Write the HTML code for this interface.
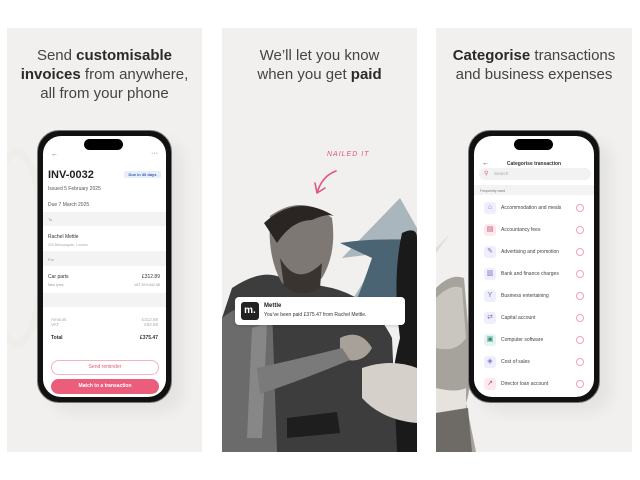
<!DOCTYPE html>
<html><head><meta charset="utf-8"><style>
*{margin:0;padding:0;box-sizing:border-box}
body{width:640px;height:480px;background:#fff;position:relative;overflow:hidden;font-family:"Liberation Sans",sans-serif;color:#2e2e2e}
.p{position:absolute;top:28px;height:424px;background:#f1f0ee;overflow:hidden}
.t{position:absolute;left:0;right:0;text-align:center;font-size:15px;line-height:19px;color:#444}
.t b{color:#2a2a2a}
.a{position:absolute}
.ph{position:absolute;background:#111;border-radius:22px;border:1px solid #777;box-shadow:12px 10px 14px rgba(0,0,0,.05)}
.sc{position:absolute;left:5px;top:5px;right:5px;bottom:5px;background:#fff;border-radius:18px;overflow:hidden}
.isl{position:absolute;width:39px;height:11px;background:#000;border-radius:6px}
.s{font-size:5px;color:#555;white-space:nowrap}
.band{position:absolute;left:0;right:0;background:#f3f3f3}
.it{position:absolute;left:0;right:0;height:22px}
.ic{position:absolute;left:10px;top:5px;width:12px;height:12px;border-radius:3px;background:#efeefb;color:#7a70c9;font-size:7px;text-align:center;line-height:12px}
.lb{position:absolute;left:27px;top:8px;font-size:5px;color:#444}
.inf{position:absolute;right:10px;top:7px;width:8px;height:8px;border:1px solid #f0a3b4;border-radius:50%}
</style></head><body>

<!-- Panel 1 -->
<div class="p" style="left:7px;width:195px">
 <div class="t" style="top:18px">Send <b>customisable</b><br><b>invoices</b> from anywhere,<br>all from your phone</div>
 <div class="a" style="left:-20px;top:120px;width:60px;height:200px;border-radius:50%;border:8px solid #ebe9e5;opacity:.5"></div>
</div>
<div class="ph" style="left:37px;top:130px;width:135px;height:273px">
 <div class="sc">
  <div class="a s" style="left:8px;top:15px;font-size:7px">←</div>
  <div class="a s" style="right:8px;top:14px;font-size:7px">···</div>
  <div class="a" style="left:5px;top:33px;font-size:11px;font-weight:bold;color:#222">INV-0032</div>
  <div class="a" style="left:81px;top:35px;width:37px;height:7px;background:#e6eefb;border-radius:2px;font-size:4px;color:#3b5bb0;text-align:center;line-height:7px;font-weight:bold">Due in 30 days</div>
  <div class="a s" style="left:5px;top:50px">Issued 5 February 2025</div>
  <div class="a s" style="left:5px;top:66px">Due 7 March 2025</div>
  <div class="band" style="top:76px;height:14px"><span class="a s" style="left:5px;top:5px;font-size:4px;color:#999">To</span></div>
  <div class="a s" style="left:5px;top:98px;color:#333">Rachel Mettle</div>
  <div class="a s" style="left:5px;top:107px;font-size:3.5px;color:#aaa">200 Bishopsgate, London</div>
  <div class="band" style="top:115px;height:15px"><span class="a s" style="left:5px;top:6px;font-size:4px;color:#999">For</span></div>
  <div class="a s" style="left:5px;top:138px;color:#333">Car parts</div>
  <div class="a s" style="right:6px;top:138px;color:#333">£312.89</div>
  <div class="a s" style="left:5px;top:147px;font-size:3.5px;color:#999">New tyres</div>
  <div class="a s" style="right:6px;top:147px;font-size:3.5px;color:#999">VAT 20% £62.58</div>
  <div class="band" style="top:157px;height:14px"></div>
  <div class="a s" style="left:8px;top:181px;font-size:4.5px;color:#aaa">Amount<br>VAT</div>
  <div class="a s" style="right:8px;top:181px;font-size:4.5px;color:#aaa;text-align:right">£312.89<br>£62.58</div>
  <div class="a s" style="left:8px;top:199px;font-weight:bold;color:#333">Total</div>
  <div class="a s" style="right:8px;top:199px;font-weight:bold;color:#333">£375.47</div>
  <div class="a" style="left:8px;top:224px;width:108px;height:15px;border:1px solid #f2b3c1;border-radius:8px;font-size:5px;color:#e85a78;text-align:center;line-height:13px">Send reminder</div>
  <div class="a" style="left:8px;top:243px;width:108px;height:15px;background:#ea5d7b;border-radius:8px;font-size:5px;color:#fff;text-align:center;line-height:15px;font-weight:bold">Match to a transaction</div>
 </div>
 <div class="isl" style="left:46px;top:8px"></div>
</div>

<!-- Panel 2 -->
<div class="p" style="left:222px;width:195px">
 <div class="t" style="top:18px">We’ll let you know<br>when you get <b>paid</b></div>
 <div class="a" style="left:105px;top:123px;font-size:7px;color:#e0557a;letter-spacing:1px;font-style:italic">NAILED IT</div>
 <svg class="a" style="left:88px;top:140px" width="30" height="30"><path d="M26 3 Q12 8 7 25 M7 25 L5 15 M7 25 L15 20" stroke="#e0557a" stroke-width="1.6" fill="none" stroke-linecap="round"/></svg>
 <svg class="a" style="left:0;top:170px" width="195" height="254">
  <polygon points="178,0 120,60 160,55 125,110 195,80 195,30" fill="#a9b6bd"/>
  <path d="M118 45 Q150 40 195 42 L195 105 Q160 110 128 118 Q140 90 150 60 Z" fill="#4a6473"/>
  <path d="M180 35 Q195 28 195 40 L195 254 L170 254 Q165 190 178 140 Q170 80 180 35Z" fill="#1a1a1a"/>
  <path d="M10 90 Q40 70 60 80 L110 90 Q150 100 170 140 L175 254 L0 254 L0 120Z" fill="#3d3d3d"/>
  <path d="M0 120 Q25 100 50 110 L55 254 L0 254Z" fill="#6b6b6b"/>
  <path d="M30 130 L45 125 L40 240 L25 240Z" fill="#9a9a9a" opacity=".6"/>
  <path d="M48 18 Q80 -5 110 20 Q115 55 100 80 Q80 100 60 85 Q45 60 48 18Z" fill="#7e7874"/>
  <path d="M58 60 Q75 90 100 65 L98 90 Q80 102 62 88Z" fill="#3a3431"/>
  <path d="M42 25 Q75 -5 112 18 Q105 15 90 22 Q70 22 55 45 Z" fill="#2a2522"/>
  <path d="M140 170 Q170 160 195 170 L195 225 Q160 222 140 200Z" fill="#d5d0c9"/>
  <path d="M118 140 Q138 130 150 150 Q140 168 118 160Z" fill="#a8a199"/>
  <path d="M35 170 Q80 160 120 150 L128 162 Q80 182 38 196Z" fill="#7a7a7a"/>
  <path d="M65 220 L115 214 L118 235 L65 240Z" fill="#1e1e1e"/>
 </svg>
 <div class="a" style="left:13px;top:269px;width:170px;height:28px;background:#fff;border-radius:4px;box-shadow:0 1px 3px rgba(0,0,0,.15)">
  <div class="a" style="left:6px;top:5px;width:18px;height:18px;background:#222;border-radius:3px;color:#fff;font-size:10px;font-weight:bold;text-align:center;line-height:17px">m.</div>
  <div class="a" style="left:29px;top:6px;font-size:6px;font-weight:bold;color:#222">Mettle</div>
  <div class="a" style="left:29px;top:15px;font-size:5px;color:#333;white-space:nowrap">You’ve been paid £375.47 from Rachel Mettle.</div>
 </div>
</div>

<!-- Panel 3 -->
<div class="p" style="left:436px;width:196px">
 <div class="t" style="top:18px"><b>Categorise</b> transactions<br>and business expenses</div>
 <svg class="a" style="left:0;top:200px" width="60" height="224">
  <polygon points="14,6 0,25 0,20" fill="#ddd"/>
  <path d="M0 60 Q15 45 28 50 L34 120 Q36 160 30 175 L40 224 L0 224Z" fill="#a6a29c"/>
  <path d="M0 70 Q15 55 26 60 L30 110 Q20 125 0 120Z" fill="#c9c5bf"/>
  <path d="M0 160 Q20 165 30 160 L30 180 L0 185Z" fill="#e6e3de"/>
  <path d="M0 185 L32 180 L36 224 L0 224Z" fill="#6e6a66"/>
 </svg>
</div>
<div class="ph" style="left:468px;top:130px;width:132px;height:273px">
 <div class="sc">
  <div class="a s" style="left:8px;top:24px;font-size:7px;color:#333">←</div>
  <div class="a s" style="left:0;right:0;text-align:center;top:25px;font-size:5px;color:#333;font-weight:bold">Categorise transaction</div>
  <div class="a" style="left:5px;top:32px;width:112px;height:12px;background:#f2f2f2;border-radius:6px"><span class="a s" style="left:5px;top:2px;color:#e0557a;font-size:6px">⚲</span><span class="a s" style="left:15px;top:3px;font-size:4.5px;color:#aaa">Search</span></div>
  <div class="band" style="top:49px;height:10px"><span class="a s" style="left:6px;top:4px;font-size:3.5px;color:#777">Frequently used</span></div>
  <div class="it" style="top:61px"><div class="ic">⌂</div><div class="lb">Accommodation and meals</div><div class="inf"></div></div>
  <div class="it" style="top:83px"><div class="ic" style="background:#fbe9ee;color:#c04a6a">▤</div><div class="lb">Accountancy fees</div><div class="inf"></div></div>
  <div class="it" style="top:105px"><div class="ic">✎</div><div class="lb">Advertising and promotion</div><div class="inf"></div></div>
  <div class="it" style="top:127px"><div class="ic">▥</div><div class="lb">Bank and finance charges</div><div class="inf"></div></div>
  <div class="it" style="top:149px"><div class="ic">Y</div><div class="lb">Business entertaining</div><div class="inf"></div></div>
  <div class="it" style="top:171px"><div class="ic">⇄</div><div class="lb">Capital account</div><div class="inf"></div></div>
  <div class="it" style="top:193px"><div class="ic" style="background:#e5f4f1;color:#2e8c7a">▣</div><div class="lb">Computer software</div><div class="inf"></div></div>
  <div class="it" style="top:215px"><div class="ic">◈</div><div class="lb">Cost of sales</div><div class="inf"></div></div>
  <div class="it" style="top:237px"><div class="ic" style="background:#fbe9ee;color:#c04a6a">↗</div><div class="lb">Director loan account</div><div class="inf"></div></div>
 </div>
 <div class="isl" style="left:45px;top:8px"></div>
</div>
</body></html>
